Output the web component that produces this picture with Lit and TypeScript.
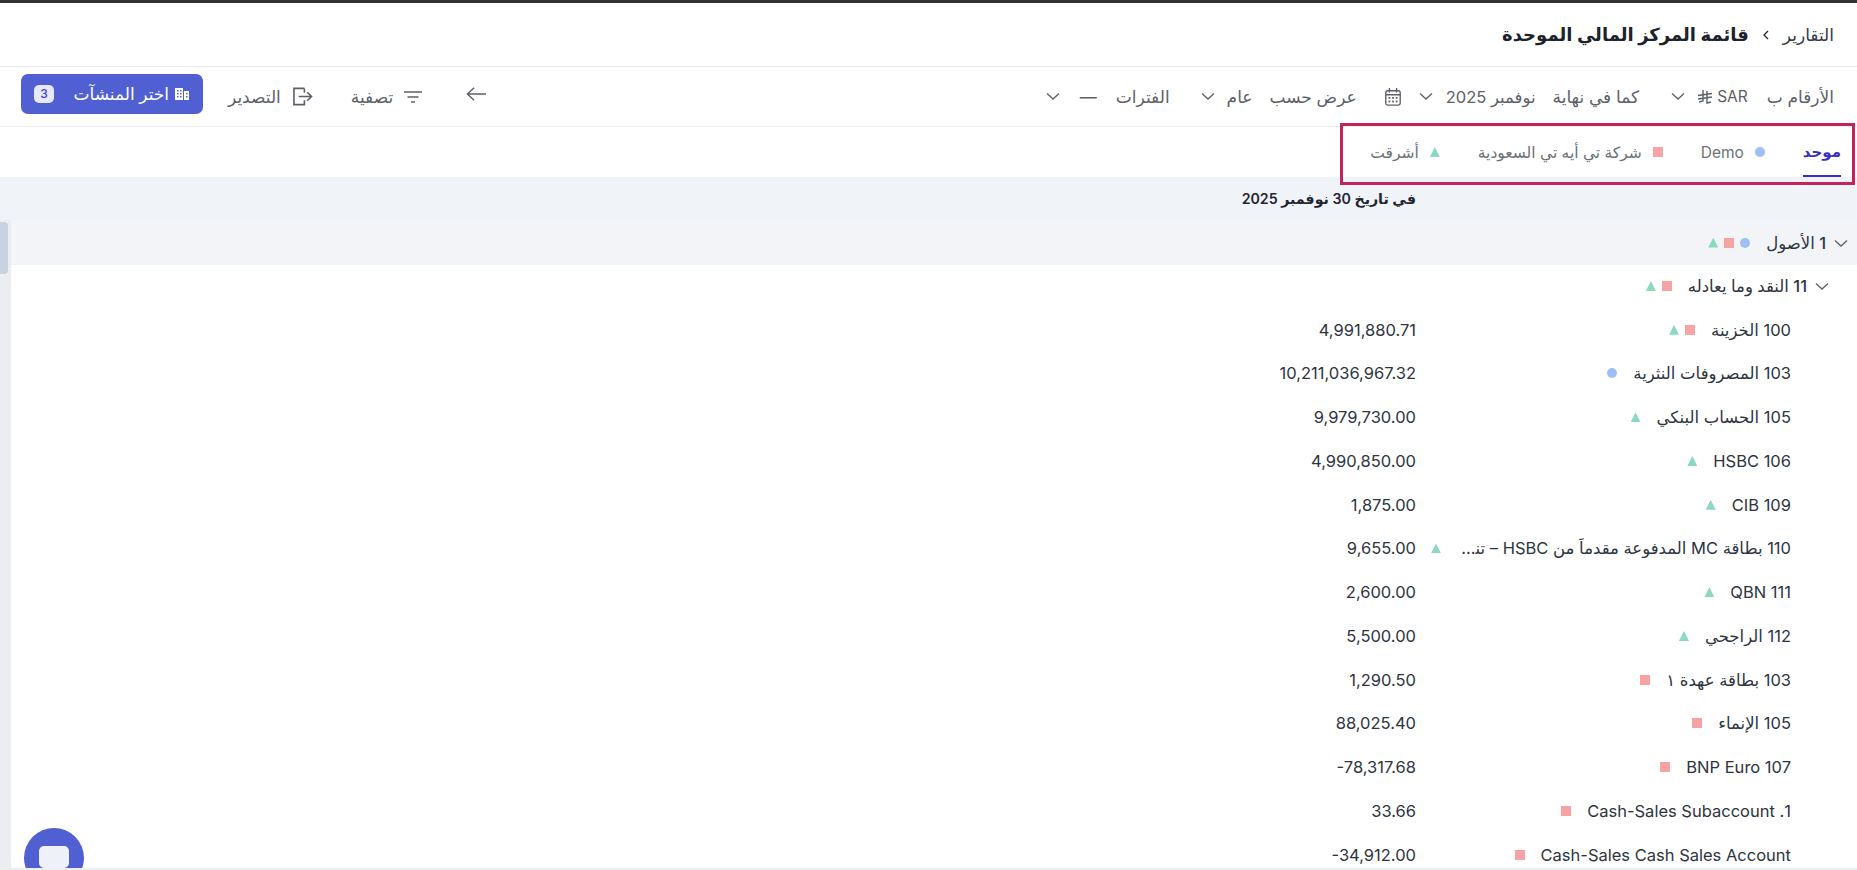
import { LitElement, html, css, svg } from "lit";
import { customElement } from "lit/decorators.js";

type Shape = "c" | "s" | "t";
const rows: { label: string; amount: string; shapes: Shape[] }[] = [
  { label: "100 الخزينة", amount: "4,991,880.71", shapes: ["s", "t"] },
  { label: "103 المصروفات النثرية", amount: "10,211,036,967.32", shapes: ["c"] },
  { label: "105 الحساب البنكي", amount: "9,979,730.00", shapes: ["t"] },
  { label: "106 HSBC", amount: "4,990,850.00", shapes: ["t"] },
  { label: "109 CIB", amount: "1,875.00", shapes: ["t"] },
  { label: "110 بطاقة MC المدفوعة مقدماً من HSBC – تنتهي", amount: "9,655.00", shapes: ["t"] },
  { label: "111 QBN", amount: "2,600.00", shapes: ["t"] },
  { label: "112 الراجحي", amount: "5,500.00", shapes: ["t"] },
  { label: "103 بطاقة عهدة ١", amount: "1,290.50", shapes: ["s"] },
  { label: "105 الإنماء", amount: "88,025.40", shapes: ["s"] },
  { label: "107 BNP Euro", amount: "-78,317.68", shapes: ["s"] },
  { label: "1. Cash-Sales Subaccount", amount: "33.66", shapes: ["s"] },
  { label: "Cash-Sales Cash Sales Account", amount: "-34,912.00", shapes: ["s"] },
];

const chevron = svg`<svg class="chev" viewBox="0 0 14 14" width="14" height="14"><path d="M1 4.5 L7 10 L13 4.5" fill="none" stroke="currentColor" stroke-width="1.3"/></svg>`;

@customElement("app-root")
export class AppRoot extends LitElement {
  static styles = css`
    :host {
      display: flex;
      flex-direction: column;
      height: 870px;
      overflow: hidden;
      position: relative;
      direction: rtl;
      background: #fff;
      color: #2d3440;
      font-family: Inter, "Noto Sans", "DejaVu Sans", sans-serif;
      font-size: 16.5px;
      border-top: 3px solid #333;
      border-bottom: 2px solid #eeeff1;
      box-sizing: border-box;
    }
    .crumbs {
      height: 64px;
      flex: none;
      display: flex;
      align-items: center;
      gap: 13px;
      padding: 0 23px;
      border-bottom: 1px solid #e6e8ec;
      box-sizing: border-box;
    }
    .crumbs .root { font-size: 17px; color: #333a45; }
    .crumbs .title { font-size: 18px; font-weight: 600; color: #1c212a; }
    .crumbs svg { color: #222; }
    .toolbar {
      height: 60px;
      flex: none;
      display: flex;
      align-items: center;
      justify-content: space-between;
      padding: 0 23px 0 21px;
      border-bottom: 1px solid #eceef1;
      box-sizing: border-box;
      color: #5c6068;
      font-size: 17px;
    }
    .group { display: flex; align-items: center; white-space: nowrap; }
    .sar { font-size: 15.5px; }
    .month { font-size: 16.5px; }
    .m4 { margin-right: 4px; }
    .m12 { margin-right: 12px; }
    .m13 { margin-right: 13px; }
    .m17 { margin-right: 17px; }
    .m19 { margin-right: 19px; }
    .m20 { margin-right: 20px; }
    .m27 { margin-right: 27px; }
    .m31 { margin-right: 31px; }
    .m32 { margin-right: 32px; }
    .chev { flex: none; color: #5c6068; }
    .actions { display: flex; align-items: center; white-space: nowrap; }
    .item { display: flex; align-items: center; gap: 11px; }
    .arrow { margin-bottom: 6px; }
    .filter { margin-right: 44px; }
    .export { margin-right: 38px; }
    .pick {
      margin-right: 25px;
      height: 40px;
      width: 182px;
      background: #5060d3;
      color: #fff;
      border-radius: 7px;
      display: flex;
      align-items: center;
      gap: 6px;
      padding: 0 14px 0 13px;
      box-sizing: border-box;
      font-weight: 500;
      font-size: 17px;
      margin-bottom: 6px;
    }
    .pick .n {
      margin-inline-start: auto;
      width: 20px;
      height: 18px;
      background: #e6e8fb;
      color: #3c46c0;
      border-radius: 5px;
      font-size: 12px;
      display: flex;
      align-items: center;
      justify-content: center;
    }
    .tabs {
      height: 50px;
      flex: none;
      display: flex;
      align-items: stretch;
      gap: 38px;
      padding-inline-start: 16px;
      box-sizing: border-box;
      color: #6b7078;
      font-size: 15.5px;
    }
    .tab { display: flex; align-items: center; gap: 11px; white-space: nowrap; }
    .tab.on {
      color: #3a2fc4;
      font-weight: 600;
      font-size: 15px;
      border-bottom: 2px solid #3a2fc4;
    }
    .annot {
      position: absolute;
      top: 120px;
      left: 1340px;
      width: 515px;
      height: 62px;
      border: 3px solid #c2255c;
      box-sizing: border-box;
      pointer-events: none;
    }
    .date {
      height: 43px;
      flex: none;
      background: #f0f3f8;
      display: flex;
      align-items: center;
      padding-right: 441px;
      font-weight: 600;
      font-size: 14.2px;
      color: #1f2530;
    }
    .body { flex: 1; display: flex; min-height: 0; }
    .main { flex: 1; min-width: 0; }
    .rail { width: 11px; flex: none; background: #ebedf0; display: flex; padding-top: 2px; box-sizing: border-box; justify-content: flex-end; }
    .thumb { width: 8px; height: 52px; background: #c8d2e0; border-radius: 0 4px 4px 0; }
    .section {
      height: 45px;
      background: #f2f4f7;
      display: flex;
      align-items: center;
      padding-right: 9px;
      gap: 8px;
      font-weight: 500;
    }
    .sub {
      height: 43.75px;
      display: flex;
      align-items: center;
      padding: 0 28px 2px 0;
      box-sizing: border-box;
      gap: 8px;
      font-weight: 500;
    }
    .shapes { display: flex; align-items: center; gap: 6px; margin-inline-start: 8px; }
    .row {
      height: 43.75px;
      display: flex;
      align-items: center;
      padding: 0 66px 2px 0;
      box-sizing: border-box;
    }
    .cell {
      width: 375px;
      flex: none;
      display: flex;
      align-items: center;
      gap: 8px;
    }
    .label {
      max-width: 334px;
      overflow: hidden;
      text-overflow: ellipsis;
      white-space: nowrap;
    }
    .amt { direction: ltr; }
    .shape { width: 10px; height: 10px; flex: none; }
    .shape.c { background: #a0bff7; border-radius: 50%; }
    .shape.s { background: #f7a3a3; }
    .shape.t { background: #8adabb; clip-path: polygon(50% 0, 100% 100%, 0 100%); }
    .chat {
      position: absolute;
      left: 24px;
      top: 825px;
      width: 60px;
      height: 60px;
      border-radius: 50%;
      background: #5060d3;
      display: flex;
      justify-content: center;
      padding-top: 18px;
      box-sizing: border-box;
    }
  `;

  private shape(s: Shape) {
    return html`<span class="shape ${s}"></span>`;
  }

  render() {
    return html`
      <div class="crumbs">
        <span class="root">التقارير</span>
        <svg viewBox="0 0 10 14" width="8" height="12"><path d="M7.5 2 L2.5 7 L7.5 12" fill="none" stroke="currentColor" stroke-width="1.6"/></svg>
        <span class="title">قائمة المركز المالي الموحدة</span>
      </div>
      <div class="toolbar">
        <div class="group">
          <span>الأرقام ب</span>
          <span class="sar m19">SAR</span>
          <svg class="m4" viewBox="0 0 16 16" width="16" height="16"><path d="M6 1 V12 L2 13 M10 2 V14 L14 13 M1 6.5 L15 4.5 M1 10 L15 8" fill="none" stroke="currentColor" stroke-width="1.4"/></svg>
          <span class="m12">${chevron}</span>
          <span class="m32">كما في نهاية</span>
          <span class="month m17">نوفمبر 2025</span>
          <span class="m13">${chevron}</span>
          <svg class="m17" viewBox="0 0 20 22" width="18" height="20"><g fill="none" stroke="#5c6068" stroke-width="1.5"><rect x="2" y="4" width="16" height="16" rx="2"/><path d="M6 1 V6 M14 1 V6 M2 8.5 H18"/></g><g fill="#5c6068"><rect x="5" y="11" width="2" height="2"/><rect x="9" y="11" width="2" height="2"/><rect x="13" y="11" width="2" height="2"/><rect x="5" y="15" width="2" height="2"/><rect x="9" y="15" width="2" height="2"/><rect x="13" y="15" width="2" height="2"/></g></svg>
          <span class="m27">عرض حسب</span>
          <span class="m17">عام</span>
          <span class="m12">${chevron}</span>
          <span class="m31">الفترات</span>
          <span class="m19">—</span>
          <span class="m20">${chevron}</span>
        </div>
        <div class="actions">
          <svg class="arrow" viewBox="0 0 22 16" width="21" height="16"><path d="M1.5 8 H21 M8.5 1.5 L1.5 8 L8.5 14.5" fill="none" stroke="#5c6068" stroke-width="1.5"/></svg>
          <div class="item filter">
            <svg viewBox="0 0 18 14" width="18" height="14"><path d="M0 2 H18 M3.5 7 H14.5 M7 12 H11" fill="none" stroke="#5c6068" stroke-width="1.7"/></svg>
            <span>تصفية</span>
          </div>
          <div class="item export">
            <svg viewBox="0 0 22 20" width="21" height="19"><path d="M13 1.5 H2 V18.5 H13 V14 M13 6 V1.5 M7 10 H20 M16 5.5 L20.5 10 L16 14.5" fill="none" stroke="#5c6068" stroke-width="1.7"/></svg>
            <span>التصدير</span>
          </div>
          <div class="pick">
            <svg viewBox="0 0 14 14" width="14" height="14"><path d="M0 1 H8 V13 H0 Z M9 4 H14 V13 H9 Z" fill="#fff"/><g fill="#5060d3"><rect x="2" y="3" width="1.5" height="1.5"/><rect x="5" y="3" width="1.5" height="1.5"/><rect x="2" y="6" width="1.5" height="1.5"/><rect x="5" y="6" width="1.5" height="1.5"/><rect x="2" y="9" width="1.5" height="1.5"/><rect x="5" y="9" width="1.5" height="1.5"/><rect x="11" y="6" width="1.5" height="1.5"/><rect x="11" y="9" width="1.5" height="1.5"/></g></svg>
            <span>اختر المنشآت</span>
            <span class="n">3</span>
          </div>
        </div>
      </div>
      <div class="tabs">
        <div class="tab on">موحد</div>
        <div class="tab">${this.shape("c")}Demo</div>
        <div class="tab">${this.shape("s")}شركة تي أيه تي السعودية</div>
        <div class="tab">${this.shape("t")}أشرقت</div>
      </div>
      <div class="annot"></div>
      <div class="date">في تاريخ 30 نوفمبر 2025</div>
      <div class="body">
        <div class="main">
          <div class="section">
            ${chevron}<span>1 الأصول</span>
            <span class="shapes">${this.shape("c")}${this.shape("s")}${this.shape("t")}</span>
          </div>
          <div class="sub">
            ${chevron}<span>11 النقد وما يعادله</span>
            <span class="shapes">${this.shape("s")}${this.shape("t")}</span>
          </div>
          ${rows.map(
            (r) => html`<div class="row">
              <div class="cell">
                <span class="label">${r.label}</span>
                <span class="shapes">${r.shapes.map((s) => this.shape(s))}</span>
              </div>
              <span class="amt">${r.amount}</span>
            </div>`
          )}
        </div>
        <div class="rail"><div class="thumb"></div></div>
      </div>
      <div class="chat">
        <svg viewBox="0 0 30 26" width="30" height="26"><path d="M5 0 H25 A5 5 0 0 1 30 5 V17 A5 5 0 0 1 25 22 H23 L23 26 L19 22 H5 A5 5 0 0 1 0 17 V5 A5 5 0 0 1 5 0 Z" fill="#eff1f8"/></svg>
      </div>
    `;
  }
}
